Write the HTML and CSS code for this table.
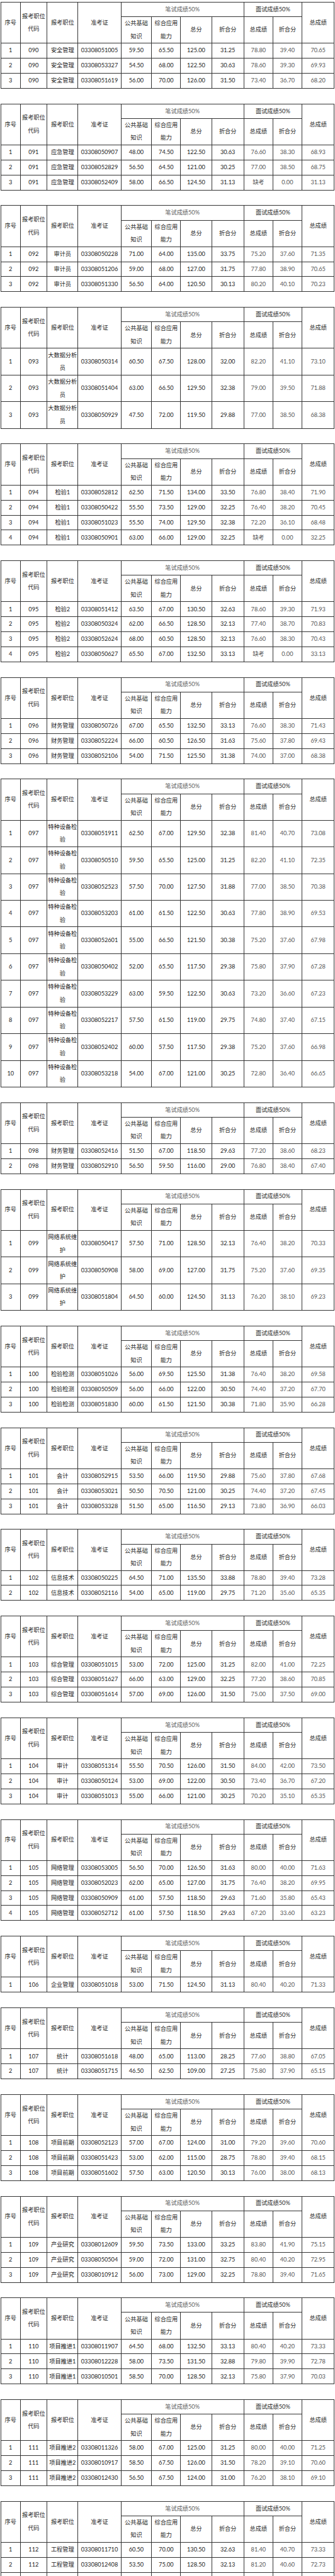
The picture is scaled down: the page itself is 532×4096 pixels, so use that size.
FILE: index.html
```html
<!DOCTYPE html>
<html lang="zh-CN">
<head>
<meta charset="utf-8">
<title>成绩表</title>
<link rel="stylesheet" href="styles.css">
</head>
<body>
<div class="page">

<table class="score">
<colgroup><col class="w1"><col class="w2"><col class="w3"><col class="w4"><col class="w5"><col class="w6"><col class="w7"><col class="w8"><col class="w9"><col class="w10"><col class="w11"></colgroup>
<thead>
<tr class="h1"><th rowspan="2">序号</th><th rowspan="2">报考职位代码</th><th rowspan="2">报考职位</th><th rowspan="2">准考证</th><th colspan="4" class="soft">笔试成绩50%</th><th colspan="2">面试成绩50%</th><th rowspan="2">总成绩</th></tr>
<tr class="h2"><th>公共基础知识</th><th>综合应用能力</th><th>总分</th><th>折合分</th><th>总成绩</th><th>折合分</th></tr>
</thead>
<tbody>
<tr><td>1</td><td>090</td><td>安全管理</td><td>03308051005</td><td>59.50</td><td>65.50</td><td>125.00</td><td>31.25</td><td>78.80</td><td>39.40</td><td>70.65</td></tr>
<tr><td>2</td><td>090</td><td>安全管理</td><td>03308053327</td><td>54.50</td><td>68.00</td><td>122.50</td><td>30.63</td><td>78.60</td><td>39.30</td><td>69.93</td></tr>
<tr><td>3</td><td>090</td><td>安全管理</td><td>03308051619</td><td>56.00</td><td>70.00</td><td>126.00</td><td>31.50</td><td>73.40</td><td>36.70</td><td>68.20</td></tr>
</tbody>
</table>

<table class="score">
<colgroup><col class="w1"><col class="w2"><col class="w3"><col class="w4"><col class="w5"><col class="w6"><col class="w7"><col class="w8"><col class="w9"><col class="w10"><col class="w11"></colgroup>
<thead>
<tr class="h1"><th rowspan="2">序号</th><th rowspan="2">报考职位代码</th><th rowspan="2">报考职位</th><th rowspan="2">准考证</th><th colspan="4" class="soft">笔试成绩50%</th><th colspan="2">面试成绩50%</th><th rowspan="2">总成绩</th></tr>
<tr class="h2"><th>公共基础知识</th><th>综合应用能力</th><th>总分</th><th>折合分</th><th>总成绩</th><th>折合分</th></tr>
</thead>
<tbody>
<tr><td>1</td><td>091</td><td>应急管理</td><td>03308050907</td><td>48.00</td><td>74.50</td><td>122.50</td><td>30.63</td><td>76.60</td><td>38.30</td><td>68.93</td></tr>
<tr><td>2</td><td>091</td><td>应急管理</td><td>03308052829</td><td>56.50</td><td>64.50</td><td>121.00</td><td>30.25</td><td>77.00</td><td>38.50</td><td>68.75</td></tr>
<tr><td>3</td><td>091</td><td>应急管理</td><td>03308052409</td><td>58.00</td><td>66.50</td><td>124.50</td><td>31.13</td><td>缺考</td><td>0.00</td><td>31.13</td></tr>
</tbody>
</table>

<table class="score">
<colgroup><col class="w1"><col class="w2"><col class="w3"><col class="w4"><col class="w5"><col class="w6"><col class="w7"><col class="w8"><col class="w9"><col class="w10"><col class="w11"></colgroup>
<thead>
<tr class="h1"><th rowspan="2">序号</th><th rowspan="2">报考职位代码</th><th rowspan="2">报考职位</th><th rowspan="2">准考证</th><th colspan="4" class="soft">笔试成绩50%</th><th colspan="2">面试成绩50%</th><th rowspan="2">总成绩</th></tr>
<tr class="h2"><th>公共基础知识</th><th>综合应用能力</th><th>总分</th><th>折合分</th><th>总成绩</th><th>折合分</th></tr>
</thead>
<tbody>
<tr><td>1</td><td>092</td><td>审计员</td><td>03308050228</td><td>71.00</td><td>64.00</td><td>135.00</td><td>33.75</td><td>75.20</td><td>37.60</td><td>71.35</td></tr>
<tr><td>2</td><td>092</td><td>审计员</td><td>03308051206</td><td>59.00</td><td>68.00</td><td>127.00</td><td>31.75</td><td>77.80</td><td>38.90</td><td>70.65</td></tr>
<tr><td>3</td><td>092</td><td>审计员</td><td>03308051330</td><td>56.50</td><td>64.00</td><td>120.50</td><td>30.13</td><td>80.20</td><td>40.10</td><td>70.23</td></tr>
</tbody>
</table>

<table class="score">
<colgroup><col class="w1"><col class="w2"><col class="w3"><col class="w4"><col class="w5"><col class="w6"><col class="w7"><col class="w8"><col class="w9"><col class="w10"><col class="w11"></colgroup>
<thead>
<tr class="h1"><th rowspan="2">序号</th><th rowspan="2">报考职位代码</th><th rowspan="2">报考职位</th><th rowspan="2">准考证</th><th colspan="4" class="soft">笔试成绩50%</th><th colspan="2">面试成绩50%</th><th rowspan="2">总成绩</th></tr>
<tr class="h2"><th>公共基础知识</th><th>综合应用能力</th><th>总分</th><th>折合分</th><th>总成绩</th><th>折合分</th></tr>
</thead>
<tbody>
<tr class="tall"><td>1</td><td>093</td><td>大数据分析员</td><td>03308050314</td><td>60.50</td><td>67.50</td><td>128.00</td><td>32.00</td><td>82.20</td><td>41.10</td><td>73.10</td></tr>
<tr class="tall"><td>2</td><td>093</td><td>大数据分析员</td><td>03308051404</td><td>63.00</td><td>66.50</td><td>129.50</td><td>32.38</td><td>79.00</td><td>39.50</td><td>71.88</td></tr>
<tr class="tall"><td>3</td><td>093</td><td>大数据分析员</td><td>03308050929</td><td>47.50</td><td>72.00</td><td>119.50</td><td>29.88</td><td>77.00</td><td>38.50</td><td>68.38</td></tr>
</tbody>
</table>

<table class="score">
<colgroup><col class="w1"><col class="w2"><col class="w3"><col class="w4"><col class="w5"><col class="w6"><col class="w7"><col class="w8"><col class="w9"><col class="w10"><col class="w11"></colgroup>
<thead>
<tr class="h1"><th rowspan="2">序号</th><th rowspan="2">报考职位代码</th><th rowspan="2">报考职位</th><th rowspan="2">准考证</th><th colspan="4" class="soft">笔试成绩50%</th><th colspan="2">面试成绩50%</th><th rowspan="2">总成绩</th></tr>
<tr class="h2"><th>公共基础知识</th><th>综合应用能力</th><th>总分</th><th>折合分</th><th>总成绩</th><th>折合分</th></tr>
</thead>
<tbody>
<tr><td>1</td><td>094</td><td>检验1</td><td>03308052812</td><td>62.50</td><td>71.50</td><td>134.00</td><td>33.50</td><td>76.80</td><td>38.40</td><td>71.90</td></tr>
<tr><td>2</td><td>094</td><td>检验1</td><td>03308050422</td><td>55.50</td><td>73.50</td><td>129.00</td><td>32.25</td><td>76.40</td><td>38.20</td><td>70.45</td></tr>
<tr><td>3</td><td>094</td><td>检验1</td><td>03308051023</td><td>55.50</td><td>74.00</td><td>129.50</td><td>32.38</td><td>72.20</td><td>36.10</td><td>68.48</td></tr>
<tr><td>4</td><td>094</td><td>检验1</td><td>03308050901</td><td>63.00</td><td>66.00</td><td>129.00</td><td>32.25</td><td>缺考</td><td>0.00</td><td>32.25</td></tr>
</tbody>
</table>

<table class="score">
<colgroup><col class="w1"><col class="w2"><col class="w3"><col class="w4"><col class="w5"><col class="w6"><col class="w7"><col class="w8"><col class="w9"><col class="w10"><col class="w11"></colgroup>
<thead>
<tr class="h1"><th rowspan="2">序号</th><th rowspan="2">报考职位代码</th><th rowspan="2">报考职位</th><th rowspan="2">准考证</th><th colspan="4" class="soft">笔试成绩50%</th><th colspan="2">面试成绩50%</th><th rowspan="2">总成绩</th></tr>
<tr class="h2"><th>公共基础知识</th><th>综合应用能力</th><th>总分</th><th>折合分</th><th>总成绩</th><th>折合分</th></tr>
</thead>
<tbody>
<tr><td>1</td><td>095</td><td>检验2</td><td>03308051412</td><td>63.50</td><td>67.00</td><td>130.50</td><td>32.63</td><td>78.60</td><td>39.30</td><td>71.93</td></tr>
<tr><td>2</td><td>095</td><td>检验2</td><td>03308050324</td><td>62.00</td><td>66.50</td><td>128.50</td><td>32.13</td><td>77.40</td><td>38.70</td><td>70.83</td></tr>
<tr><td>3</td><td>095</td><td>检验2</td><td>03308052624</td><td>68.00</td><td>60.50</td><td>128.50</td><td>32.13</td><td>76.60</td><td>38.30</td><td>70.43</td></tr>
<tr><td>4</td><td>095</td><td>检验2</td><td>03308050627</td><td>65.50</td><td>67.00</td><td>132.50</td><td>33.13</td><td>缺考</td><td>0.00</td><td>33.13</td></tr>
</tbody>
</table>

<table class="score">
<colgroup><col class="w1"><col class="w2"><col class="w3"><col class="w4"><col class="w5"><col class="w6"><col class="w7"><col class="w8"><col class="w9"><col class="w10"><col class="w11"></colgroup>
<thead>
<tr class="h1"><th rowspan="2">序号</th><th rowspan="2">报考职位代码</th><th rowspan="2">报考职位</th><th rowspan="2">准考证</th><th colspan="4" class="soft">笔试成绩50%</th><th colspan="2">面试成绩50%</th><th rowspan="2">总成绩</th></tr>
<tr class="h2"><th>公共基础知识</th><th>综合应用能力</th><th>总分</th><th>折合分</th><th>总成绩</th><th>折合分</th></tr>
</thead>
<tbody>
<tr><td>1</td><td>096</td><td>财务管理</td><td>03308050726</td><td>67.00</td><td>65.50</td><td>132.50</td><td>33.13</td><td>76.60</td><td>38.30</td><td>71.43</td></tr>
<tr><td>2</td><td>096</td><td>财务管理</td><td>03308052224</td><td>66.00</td><td>60.50</td><td>126.50</td><td>31.63</td><td>75.60</td><td>37.80</td><td>69.43</td></tr>
<tr><td>3</td><td>096</td><td>财务管理</td><td>03308052106</td><td>54.00</td><td>71.50</td><td>125.50</td><td>31.38</td><td>74.00</td><td>37.00</td><td>68.38</td></tr>
</tbody>
</table>

<table class="score">
<colgroup><col class="w1"><col class="w2"><col class="w3"><col class="w4"><col class="w5"><col class="w6"><col class="w7"><col class="w8"><col class="w9"><col class="w10"><col class="w11"></colgroup>
<thead>
<tr class="h1"><th rowspan="2">序号</th><th rowspan="2">报考职位代码</th><th rowspan="2">报考职位</th><th rowspan="2">准考证</th><th colspan="4" class="soft">笔试成绩50%</th><th colspan="2">面试成绩50%</th><th rowspan="2">总成绩</th></tr>
<tr class="h2"><th>公共基础知识</th><th>综合应用能力</th><th>总分</th><th>折合分</th><th>总成绩</th><th>折合分</th></tr>
</thead>
<tbody>
<tr class="tall"><td>1</td><td>097</td><td>特种设备检验</td><td>03308051911</td><td>62.50</td><td>67.00</td><td>129.50</td><td>32.38</td><td>81.40</td><td>40.70</td><td>73.08</td></tr>
<tr class="tall"><td>2</td><td>097</td><td>特种设备检验</td><td>03308050510</td><td>59.50</td><td>65.50</td><td>125.00</td><td>31.25</td><td>82.20</td><td>41.10</td><td>72.35</td></tr>
<tr class="tall"><td>3</td><td>097</td><td>特种设备检验</td><td>03308052523</td><td>57.50</td><td>70.00</td><td>127.50</td><td>31.88</td><td>77.00</td><td>38.50</td><td>70.38</td></tr>
<tr class="tall"><td>4</td><td>097</td><td>特种设备检验</td><td>03308053203</td><td>61.00</td><td>61.50</td><td>122.50</td><td>30.63</td><td>77.80</td><td>38.90</td><td>69.53</td></tr>
<tr class="tall"><td>5</td><td>097</td><td>特种设备检验</td><td>03308052601</td><td>55.00</td><td>66.50</td><td>121.50</td><td>30.38</td><td>75.20</td><td>37.60</td><td>67.98</td></tr>
<tr class="tall"><td>6</td><td>097</td><td>特种设备检验</td><td>03308050402</td><td>52.00</td><td>65.50</td><td>117.50</td><td>29.38</td><td>75.80</td><td>37.90</td><td>67.28</td></tr>
<tr class="tall"><td>7</td><td>097</td><td>特种设备检验</td><td>03308053229</td><td>63.00</td><td>59.50</td><td>122.50</td><td>30.63</td><td>73.20</td><td>36.60</td><td>67.23</td></tr>
<tr class="tall"><td>8</td><td>097</td><td>特种设备检验</td><td>03308052217</td><td>57.50</td><td>61.50</td><td>119.00</td><td>29.75</td><td>74.80</td><td>37.40</td><td>67.15</td></tr>
<tr class="tall"><td>9</td><td>097</td><td>特种设备检验</td><td>03308052402</td><td>60.00</td><td>57.50</td><td>117.50</td><td>29.38</td><td>75.20</td><td>37.60</td><td>66.98</td></tr>
<tr class="tall"><td>10</td><td>097</td><td>特种设备检验</td><td>03308053218</td><td>54.00</td><td>67.00</td><td>121.00</td><td>30.25</td><td>72.80</td><td>36.40</td><td>66.65</td></tr>
</tbody>
</table>

<table class="score">
<colgroup><col class="w1"><col class="w2"><col class="w3"><col class="w4"><col class="w5"><col class="w6"><col class="w7"><col class="w8"><col class="w9"><col class="w10"><col class="w11"></colgroup>
<thead>
<tr class="h1"><th rowspan="2">序号</th><th rowspan="2">报考职位代码</th><th rowspan="2">报考职位</th><th rowspan="2">准考证</th><th colspan="4" class="soft">笔试成绩50%</th><th colspan="2">面试成绩50%</th><th rowspan="2">总成绩</th></tr>
<tr class="h2"><th>公共基础知识</th><th>综合应用能力</th><th>总分</th><th>折合分</th><th>总成绩</th><th>折合分</th></tr>
</thead>
<tbody>
<tr><td>1</td><td>098</td><td>财务管理</td><td>03308052416</td><td>51.50</td><td>67.00</td><td>118.50</td><td>29.63</td><td>77.20</td><td>38.60</td><td>68.23</td></tr>
<tr><td>2</td><td>098</td><td>财务管理</td><td>03308052910</td><td>56.50</td><td>59.50</td><td>116.00</td><td>29.00</td><td>76.80</td><td>38.40</td><td>67.40</td></tr>
</tbody>
</table>

<table class="score">
<colgroup><col class="w1"><col class="w2"><col class="w3"><col class="w4"><col class="w5"><col class="w6"><col class="w7"><col class="w8"><col class="w9"><col class="w10"><col class="w11"></colgroup>
<thead>
<tr class="h1"><th rowspan="2">序号</th><th rowspan="2">报考职位代码</th><th rowspan="2">报考职位</th><th rowspan="2">准考证</th><th colspan="4" class="soft">笔试成绩50%</th><th colspan="2">面试成绩50%</th><th rowspan="2">总成绩</th></tr>
<tr class="h2"><th>公共基础知识</th><th>综合应用能力</th><th>总分</th><th>折合分</th><th>总成绩</th><th>折合分</th></tr>
</thead>
<tbody>
<tr class="tall"><td>1</td><td>099</td><td>网络系统维护</td><td>03308050417</td><td>57.50</td><td>71.00</td><td>128.50</td><td>32.13</td><td>76.40</td><td>38.20</td><td>70.33</td></tr>
<tr class="tall"><td>2</td><td>099</td><td>网络系统维护</td><td>03308050908</td><td>58.00</td><td>69.00</td><td>127.00</td><td>31.75</td><td>75.20</td><td>37.60</td><td>69.35</td></tr>
<tr class="tall"><td>3</td><td>099</td><td>网络系统维护</td><td>03308051804</td><td>64.50</td><td>60.00</td><td>124.50</td><td>31.13</td><td>76.20</td><td>38.10</td><td>69.23</td></tr>
</tbody>
</table>

<table class="score">
<colgroup><col class="w1"><col class="w2"><col class="w3"><col class="w4"><col class="w5"><col class="w6"><col class="w7"><col class="w8"><col class="w9"><col class="w10"><col class="w11"></colgroup>
<thead>
<tr class="h1"><th rowspan="2">序号</th><th rowspan="2">报考职位代码</th><th rowspan="2">报考职位</th><th rowspan="2">准考证</th><th colspan="4" class="soft">笔试成绩50%</th><th colspan="2">面试成绩50%</th><th rowspan="2">总成绩</th></tr>
<tr class="h2"><th>公共基础知识</th><th>综合应用能力</th><th>总分</th><th>折合分</th><th>总成绩</th><th>折合分</th></tr>
</thead>
<tbody>
<tr><td>1</td><td>100</td><td>检验检测</td><td>03308051026</td><td>56.00</td><td>69.50</td><td>125.50</td><td>31.38</td><td>76.40</td><td>38.20</td><td>69.58</td></tr>
<tr><td>2</td><td>100</td><td>检验检测</td><td>03308050509</td><td>56.00</td><td>66.00</td><td>122.00</td><td>30.50</td><td>74.40</td><td>37.20</td><td>67.70</td></tr>
<tr><td>3</td><td>100</td><td>检验检测</td><td>03308051830</td><td>60.00</td><td>61.50</td><td>121.50</td><td>30.38</td><td>71.80</td><td>35.90</td><td>66.28</td></tr>
</tbody>
</table>

<table class="score">
<colgroup><col class="w1"><col class="w2"><col class="w3"><col class="w4"><col class="w5"><col class="w6"><col class="w7"><col class="w8"><col class="w9"><col class="w10"><col class="w11"></colgroup>
<thead>
<tr class="h1"><th rowspan="2">序号</th><th rowspan="2">报考职位代码</th><th rowspan="2">报考职位</th><th rowspan="2">准考证</th><th colspan="4" class="soft">笔试成绩50%</th><th colspan="2">面试成绩50%</th><th rowspan="2">总成绩</th></tr>
<tr class="h2"><th>公共基础知识</th><th>综合应用能力</th><th>总分</th><th>折合分</th><th>总成绩</th><th>折合分</th></tr>
</thead>
<tbody>
<tr><td>1</td><td>101</td><td>会计</td><td>03308052915</td><td>53.50</td><td>66.00</td><td>119.50</td><td>29.88</td><td>75.60</td><td>37.80</td><td>67.68</td></tr>
<tr><td>2</td><td>101</td><td>会计</td><td>03308053021</td><td>50.50</td><td>70.50</td><td>121.00</td><td>30.25</td><td>74.40</td><td>37.20</td><td>67.45</td></tr>
<tr><td>3</td><td>101</td><td>会计</td><td>03308053328</td><td>51.50</td><td>65.00</td><td>116.50</td><td>29.13</td><td>73.80</td><td>36.90</td><td>66.03</td></tr>
</tbody>
</table>

<table class="score">
<colgroup><col class="w1"><col class="w2"><col class="w3"><col class="w4"><col class="w5"><col class="w6"><col class="w7"><col class="w8"><col class="w9"><col class="w10"><col class="w11"></colgroup>
<thead>
<tr class="h1"><th rowspan="2">序号</th><th rowspan="2">报考职位代码</th><th rowspan="2">报考职位</th><th rowspan="2">准考证</th><th colspan="4" class="soft">笔试成绩50%</th><th colspan="2">面试成绩50%</th><th rowspan="2">总成绩</th></tr>
<tr class="h2"><th>公共基础知识</th><th>综合应用能力</th><th>总分</th><th>折合分</th><th>总成绩</th><th>折合分</th></tr>
</thead>
<tbody>
<tr><td>1</td><td>102</td><td>信息技术</td><td>03308050225</td><td>64.50</td><td>71.00</td><td>135.50</td><td>33.88</td><td>78.80</td><td>39.40</td><td>73.28</td></tr>
<tr><td>2</td><td>102</td><td>信息技术</td><td>03308052116</td><td>54.00</td><td>65.00</td><td>119.00</td><td>29.75</td><td>71.20</td><td>35.60</td><td>65.35</td></tr>
</tbody>
</table>

<table class="score">
<colgroup><col class="w1"><col class="w2"><col class="w3"><col class="w4"><col class="w5"><col class="w6"><col class="w7"><col class="w8"><col class="w9"><col class="w10"><col class="w11"></colgroup>
<thead>
<tr class="h1"><th rowspan="2">序号</th><th rowspan="2">报考职位代码</th><th rowspan="2">报考职位</th><th rowspan="2">准考证</th><th colspan="4" class="soft">笔试成绩50%</th><th colspan="2">面试成绩50%</th><th rowspan="2">总成绩</th></tr>
<tr class="h2"><th>公共基础知识</th><th>综合应用能力</th><th>总分</th><th>折合分</th><th>总成绩</th><th>折合分</th></tr>
</thead>
<tbody>
<tr><td>1</td><td>103</td><td>综合管理</td><td>03308051015</td><td>53.00</td><td>72.00</td><td>125.00</td><td>31.25</td><td>82.00</td><td>41.00</td><td>72.25</td></tr>
<tr><td>2</td><td>103</td><td>综合管理</td><td>03308051627</td><td>66.00</td><td>63.00</td><td>129.00</td><td>32.25</td><td>77.20</td><td>38.60</td><td>70.85</td></tr>
<tr><td>3</td><td>103</td><td>综合管理</td><td>03308051614</td><td>57.00</td><td>69.00</td><td>126.00</td><td>31.50</td><td>75.00</td><td>37.50</td><td>69.00</td></tr>
</tbody>
</table>

<table class="score">
<colgroup><col class="w1"><col class="w2"><col class="w3"><col class="w4"><col class="w5"><col class="w6"><col class="w7"><col class="w8"><col class="w9"><col class="w10"><col class="w11"></colgroup>
<thead>
<tr class="h1"><th rowspan="2">序号</th><th rowspan="2">报考职位代码</th><th rowspan="2">报考职位</th><th rowspan="2">准考证</th><th colspan="4" class="soft">笔试成绩50%</th><th colspan="2">面试成绩50%</th><th rowspan="2">总成绩</th></tr>
<tr class="h2"><th>公共基础知识</th><th>综合应用能力</th><th>总分</th><th>折合分</th><th>总成绩</th><th>折合分</th></tr>
</thead>
<tbody>
<tr><td>1</td><td>104</td><td>审计</td><td>03308051314</td><td>55.50</td><td>70.50</td><td>126.00</td><td>31.50</td><td>84.00</td><td>42.00</td><td>73.50</td></tr>
<tr><td>2</td><td>104</td><td>审计</td><td>03308050124</td><td>53.00</td><td>69.00</td><td>122.00</td><td>30.50</td><td>73.40</td><td>36.70</td><td>67.20</td></tr>
<tr><td>3</td><td>104</td><td>审计</td><td>03308051013</td><td>55.00</td><td>66.00</td><td>121.00</td><td>30.25</td><td>70.20</td><td>35.10</td><td>65.35</td></tr>
</tbody>
</table>

<table class="score">
<colgroup><col class="w1"><col class="w2"><col class="w3"><col class="w4"><col class="w5"><col class="w6"><col class="w7"><col class="w8"><col class="w9"><col class="w10"><col class="w11"></colgroup>
<thead>
<tr class="h1"><th rowspan="2">序号</th><th rowspan="2">报考职位代码</th><th rowspan="2">报考职位</th><th rowspan="2">准考证</th><th colspan="4" class="soft">笔试成绩50%</th><th colspan="2">面试成绩50%</th><th rowspan="2">总成绩</th></tr>
<tr class="h2"><th>公共基础知识</th><th>综合应用能力</th><th>总分</th><th>折合分</th><th>总成绩</th><th>折合分</th></tr>
</thead>
<tbody>
<tr><td>1</td><td>105</td><td>网络管理</td><td>03308053005</td><td>56.50</td><td>70.00</td><td>126.50</td><td>31.63</td><td>80.00</td><td>40.00</td><td>71.63</td></tr>
<tr><td>2</td><td>105</td><td>网络管理</td><td>03308052023</td><td>62.00</td><td>65.00</td><td>127.00</td><td>31.75</td><td>76.40</td><td>38.20</td><td>69.95</td></tr>
<tr><td>3</td><td>105</td><td>网络管理</td><td>03308050909</td><td>61.00</td><td>57.50</td><td>118.50</td><td>29.63</td><td>71.60</td><td>35.80</td><td>65.43</td></tr>
<tr><td>4</td><td>105</td><td>网络管理</td><td>03308052712</td><td>61.00</td><td>57.50</td><td>118.50</td><td>29.63</td><td>67.20</td><td>33.60</td><td>63.23</td></tr>
</tbody>
</table>

<table class="score">
<colgroup><col class="w1"><col class="w2"><col class="w3"><col class="w4"><col class="w5"><col class="w6"><col class="w7"><col class="w8"><col class="w9"><col class="w10"><col class="w11"></colgroup>
<thead>
<tr class="h1"><th rowspan="2">序号</th><th rowspan="2">报考职位代码</th><th rowspan="2">报考职位</th><th rowspan="2">准考证</th><th colspan="4" class="soft">笔试成绩50%</th><th colspan="2">面试成绩50%</th><th rowspan="2">总成绩</th></tr>
<tr class="h2"><th>公共基础知识</th><th>综合应用能力</th><th>总分</th><th>折合分</th><th>总成绩</th><th>折合分</th></tr>
</thead>
<tbody>
<tr><td>1</td><td>106</td><td>企业管理</td><td>03308051018</td><td>53.00</td><td>71.50</td><td>124.50</td><td>31.13</td><td>80.40</td><td>40.20</td><td>71.33</td></tr>
</tbody>
</table>

<table class="score">
<colgroup><col class="w1"><col class="w2"><col class="w3"><col class="w4"><col class="w5"><col class="w6"><col class="w7"><col class="w8"><col class="w9"><col class="w10"><col class="w11"></colgroup>
<thead>
<tr class="h1"><th rowspan="2">序号</th><th rowspan="2">报考职位代码</th><th rowspan="2">报考职位</th><th rowspan="2">准考证</th><th colspan="4" class="soft">笔试成绩50%</th><th colspan="2">面试成绩50%</th><th rowspan="2">总成绩</th></tr>
<tr class="h2"><th>公共基础知识</th><th>综合应用能力</th><th>总分</th><th>折合分</th><th>总成绩</th><th>折合分</th></tr>
</thead>
<tbody>
<tr><td>1</td><td>107</td><td>统计</td><td>03308051618</td><td>48.00</td><td>65.00</td><td>113.00</td><td>28.25</td><td>77.60</td><td>38.80</td><td>67.05</td></tr>
<tr><td>2</td><td>107</td><td>统计</td><td>03308051715</td><td>46.50</td><td>62.50</td><td>109.00</td><td>27.25</td><td>75.80</td><td>37.90</td><td>65.15</td></tr>
</tbody>
</table>

<table class="score">
<colgroup><col class="w1"><col class="w2"><col class="w3"><col class="w4"><col class="w5"><col class="w6"><col class="w7"><col class="w8"><col class="w9"><col class="w10"><col class="w11"></colgroup>
<thead>
<tr class="h1"><th rowspan="2">序号</th><th rowspan="2">报考职位代码</th><th rowspan="2">报考职位</th><th rowspan="2">准考证</th><th colspan="4" class="soft">笔试成绩50%</th><th colspan="2">面试成绩50%</th><th rowspan="2">总成绩</th></tr>
<tr class="h2"><th>公共基础知识</th><th>综合应用能力</th><th>总分</th><th>折合分</th><th>总成绩</th><th>折合分</th></tr>
</thead>
<tbody>
<tr><td>1</td><td>108</td><td>项目前期</td><td>03308052123</td><td>57.00</td><td>67.00</td><td>124.00</td><td>31.00</td><td>79.20</td><td>39.60</td><td>70.60</td></tr>
<tr><td>2</td><td>108</td><td>项目前期</td><td>03308051423</td><td>53.00</td><td>62.00</td><td>115.00</td><td>28.75</td><td>78.80</td><td>39.40</td><td>68.15</td></tr>
<tr><td>3</td><td>108</td><td>项目前期</td><td>03308051602</td><td>57.50</td><td>63.00</td><td>120.50</td><td>30.13</td><td>76.00</td><td>38.00</td><td>68.13</td></tr>
</tbody>
</table>

<table class="score">
<colgroup><col class="w1"><col class="w2"><col class="w3"><col class="w4"><col class="w5"><col class="w6"><col class="w7"><col class="w8"><col class="w9"><col class="w10"><col class="w11"></colgroup>
<thead>
<tr class="h1"><th rowspan="2">序号</th><th rowspan="2">报考职位代码</th><th rowspan="2">报考职位</th><th rowspan="2">准考证</th><th colspan="4" class="soft">笔试成绩50%</th><th colspan="2">面试成绩50%</th><th rowspan="2">总成绩</th></tr>
<tr class="h2"><th>公共基础知识</th><th>综合应用能力</th><th>总分</th><th>折合分</th><th>总成绩</th><th>折合分</th></tr>
</thead>
<tbody>
<tr><td>1</td><td>109</td><td>产业研究</td><td>03308012609</td><td>59.50</td><td>73.50</td><td>133.00</td><td>33.25</td><td>83.80</td><td>41.90</td><td>75.15</td></tr>
<tr><td>2</td><td>109</td><td>产业研究</td><td>03308050504</td><td>59.00</td><td>72.00</td><td>131.00</td><td>32.75</td><td>80.40</td><td>40.20</td><td>72.95</td></tr>
<tr><td>3</td><td>109</td><td>产业研究</td><td>03308010912</td><td>56.00</td><td>73.00</td><td>129.00</td><td>32.25</td><td>78.80</td><td>39.40</td><td>71.65</td></tr>
</tbody>
</table>

<table class="score">
<colgroup><col class="w1"><col class="w2"><col class="w3"><col class="w4"><col class="w5"><col class="w6"><col class="w7"><col class="w8"><col class="w9"><col class="w10"><col class="w11"></colgroup>
<thead>
<tr class="h1"><th rowspan="2">序号</th><th rowspan="2">报考职位代码</th><th rowspan="2">报考职位</th><th rowspan="2">准考证</th><th colspan="4" class="soft">笔试成绩50%</th><th colspan="2">面试成绩50%</th><th rowspan="2">总成绩</th></tr>
<tr class="h2"><th>公共基础知识</th><th>综合应用能力</th><th>总分</th><th>折合分</th><th>总成绩</th><th>折合分</th></tr>
</thead>
<tbody>
<tr><td>1</td><td>110</td><td>项目推进1</td><td>03308011907</td><td>64.50</td><td>68.00</td><td>132.50</td><td>33.13</td><td>80.40</td><td>40.20</td><td>73.33</td></tr>
<tr><td>2</td><td>110</td><td>项目推进1</td><td>03308012228</td><td>58.00</td><td>73.50</td><td>131.50</td><td>32.88</td><td>79.80</td><td>39.90</td><td>72.78</td></tr>
<tr><td>3</td><td>110</td><td>项目推进1</td><td>03308010501</td><td>58.50</td><td>70.00</td><td>128.50</td><td>32.13</td><td>75.80</td><td>37.90</td><td>70.03</td></tr>
</tbody>
</table>

<table class="score">
<colgroup><col class="w1"><col class="w2"><col class="w3"><col class="w4"><col class="w5"><col class="w6"><col class="w7"><col class="w8"><col class="w9"><col class="w10"><col class="w11"></colgroup>
<thead>
<tr class="h1"><th rowspan="2">序号</th><th rowspan="2">报考职位代码</th><th rowspan="2">报考职位</th><th rowspan="2">准考证</th><th colspan="4" class="soft">笔试成绩50%</th><th colspan="2">面试成绩50%</th><th rowspan="2">总成绩</th></tr>
<tr class="h2"><th>公共基础知识</th><th>综合应用能力</th><th>总分</th><th>折合分</th><th>总成绩</th><th>折合分</th></tr>
</thead>
<tbody>
<tr><td>1</td><td>111</td><td>项目推进2</td><td>03308011326</td><td>58.00</td><td>67.00</td><td>125.00</td><td>31.25</td><td>80.00</td><td>40.00</td><td>71.25</td></tr>
<tr><td>2</td><td>111</td><td>项目推进2</td><td>03308010917</td><td>58.50</td><td>67.50</td><td>126.00</td><td>31.50</td><td>78.20</td><td>39.10</td><td>70.60</td></tr>
<tr><td>3</td><td>111</td><td>项目推进2</td><td>03308012430</td><td>56.50</td><td>67.50</td><td>124.00</td><td>31.00</td><td>76.20</td><td>38.10</td><td>69.10</td></tr>
</tbody>
</table>

<table class="score">
<colgroup><col class="w1"><col class="w2"><col class="w3"><col class="w4"><col class="w5"><col class="w6"><col class="w7"><col class="w8"><col class="w9"><col class="w10"><col class="w11"></colgroup>
<thead>
<tr class="h1"><th rowspan="2">序号</th><th rowspan="2">报考职位代码</th><th rowspan="2">报考职位</th><th rowspan="2">准考证</th><th colspan="4" class="soft">笔试成绩50%</th><th colspan="2">面试成绩50%</th><th rowspan="2">总成绩</th></tr>
<tr class="h2"><th>公共基础知识</th><th>综合应用能力</th><th>总分</th><th>折合分</th><th>总成绩</th><th>折合分</th></tr>
</thead>
<tbody>
<tr><td>1</td><td>112</td><td>工程管理</td><td>03308011710</td><td>60.50</td><td>70.00</td><td>130.50</td><td>32.63</td><td>81.40</td><td>40.70</td><td>73.33</td></tr>
<tr><td>2</td><td>112</td><td>工程管理</td><td>03308012408</td><td>53.50</td><td>75.00</td><td>128.50</td><td>32.13</td><td>81.20</td><td>40.60</td><td>72.73</td></tr>
<tr><td>3</td><td>112</td><td>工程管理</td><td>03308012015</td><td>59.50</td><td>69.00</td><td>128.50</td><td>32.13</td><td>80.60</td><td>40.30</td><td>72.43</td></tr>
</tbody>
</table>

</div>
</body>
</html>
```

FILE: styles.css
```css
html, body {
  margin: 0;
  padding: 0;
  background: #ffffff;
}

body {
  font-family: "Lato", "Noto Sans CJK SC", sans-serif;
  font-size: 9.2px;
  color: #222222;
}

.page {
  display: flex;
  flex-direction: column;
  align-items: flex-start;
  gap: 23.75px;
  padding: 3px 1px 0 1px;
}

.score {
  width: 529.5px;
  table-layout: fixed;
  border-collapse: collapse;
  border: 1.5px solid #222222;
}

.score .w1 { width: 30.5px; }
.score .w2 { width: 42.7px; }
.score .w3 { width: 49.2px; }
.score .w4 { width: 68.2px; }
.score .w5 { width: 48.8px; }
.score .w6 { width: 46px; }
.score .w7 { width: 49.2px; }
.score .w8 { width: 51.2px; }
.score .w9 { width: 46.1px; }
.score .w10 { width: 46.1px; }
.score .w11 { width: 51.5px; }

.score th,
.score td {
  border: 1px solid #333333;
  padding: 0 1px;
  text-align: center;
  vertical-align: middle;
  font-weight: normal;
  line-height: 20.5px;
  overflow: hidden;
}

.score th {
  color: #2a2a2a;
}

.score th.soft {
  color: #5e5e5e;
}

.score .h1 { height: 23.2px; }
.score .h2 { height: 42.1px; }

.score tbody tr { height: 23.9px; }
.score tbody tr.tall { height: 42.45px; }

.score tbody td:nth-child(n+9) {
  color: #555555;
}
```
